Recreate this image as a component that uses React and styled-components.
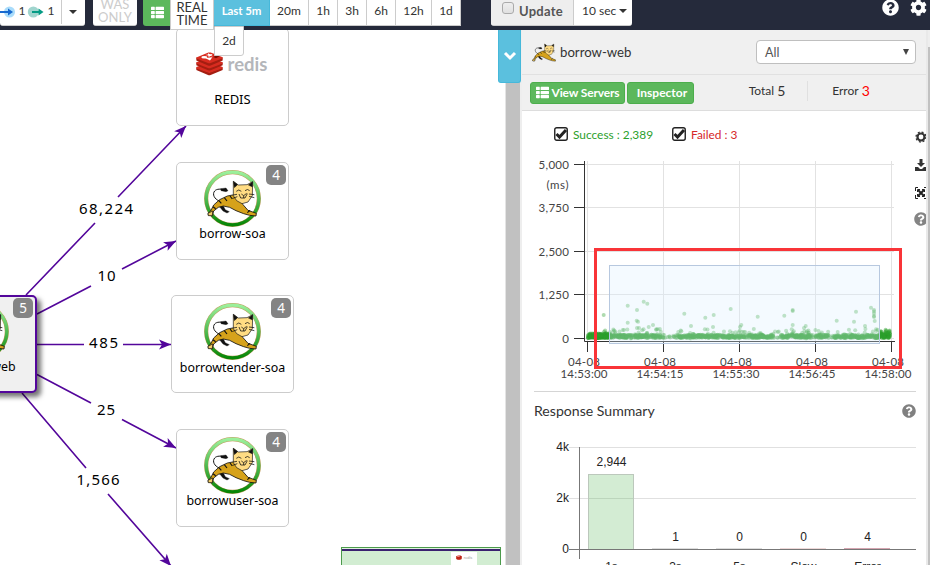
import React from "react";
import styled, { createGlobalStyle, css } from "styled-components";
import { FaCog, FaQuestionCircle, FaThList } from "react-icons/fa";

const GlobalStyle = createGlobalStyle`
  * { box-sizing: border-box; }
  body { margin: 0; background: #fff; font-family: Lato, "Liberation Sans", sans-serif; font-size: 13px; color: #333; overflow: hidden; }
`;

const PURPLE = "#53069b";

const Page = styled.div`
  width: 930px;
  height: 565px;
  display: flex;
  flex-direction: column;
  overflow: hidden;
`;

const Header = styled.header`
  height: 30px;
  flex: none;
  display: flex;
  align-items: flex-start;
  background: #252a3b;
  position: relative;
  z-index: 5;
`;

const Bar = styled.div`
  display: flex;
  height: 26px;
  width: ${(p) => p.$width}px;
  margin-right: ${(p) => p.$gap || 0}px;
  background: #fff;
  border-radius: 0 0 3px 3px;
  border-bottom: 1px solid #ccc;
  overflow: hidden;
`;

const CallCounts = styled.div`
  display: flex;
  align-items: center;
  width: 62px;
  height: 24px;
  border-right: 1px solid #ccc;
`;

const One = styled.span`
  width: ${(p) => p.$width}px;
  text-align: center;
  font-size: 12px;
  line-height: 14px;
  padding-bottom: 2px;
`;

const Caret = styled.span`
  width: 0;
  height: 0;
  border: 4px solid transparent;
  border-top-color: #333;
  border-bottom: 0;
  margin: ${(p) => p.$margin || "0"};
  ${(p) => p.$tall && css`
    border-width: 6px 3.5px 0;
    border-top-color: #444;
  `}
`;

const Stacked = styled.button`
  width: ${(p) => p.$width}px;
  height: ${(p) => p.$height}px;
  margin: 0 ${(p) => p.$gap || 0}px 0 0;
  padding: 0 0 ${(p) => p.$pad || 0}px;
  border: 0 solid #ccc;
  border-width: 0 ${(p) => (p.$side ? "1px" : 0)} 1px;
  border-radius: ${(p) => (p.$side ? 0 : "0 0 3px 3px")};
  background: #fff;
  color: ${(p) => p.$color};
  font: 13px/13px Lato, sans-serif;
  display: flex;
  flex-direction: column;
  align-items: center;
  justify-content: flex-end;
`;

const ListButton = styled.button`
  width: 27px;
  height: 26px;
  border: 0;
  padding: 0 0 2px 1px;
  background: #5cb85c;
  color: #fff;
  border-radius: 0 0 0 3px;
  display: grid;
  place-items: center;
`;

const Ranges = styled.div`
  display: flex;
  position: relative;
  margin-right: 30px;
`;

const Range = styled.button`
  width: ${(p) => p.$width}px;
  height: 26px;
  border: 0 solid #ccc;
  border-width: 0 1px 1px 0;
  background: #fff;
  color: #333;
  padding: 0 0 4px;
  font: 12px/20px Lato, sans-serif;
  ${(p) => p.$active && css`
    background: #5bc0de;
    border-color: #46b8da;
    color: #fff;
    font-weight: 700;
    font-size: 11.5px;
    letter-spacing: -0.1px;
  `}
`;

const WrappedRange = styled(Range)`
  position: absolute;
  left: 0;
  top: 26px;
  height: 30px;
  padding: 0;
  border-width: 1px;
  border-radius: 0 0 3px 0;
`;

const UpdateToggle = styled.div`
  width: 83px;
  display: flex;
  align-items: center;
  gap: 5px;
  padding: 0 0 3px 11px;
  background: #eee;
  border-right: 1px solid #ccc;
  color: #555;
  font-size: 13px;
  font-weight: 700;
  letter-spacing: 0.25px;
`;

const Tick = styled.span`
  width: 12px;
  height: 12px;
  margin-top: -6px;
  border: 1px solid #aaa;
  border-radius: 3px;
  background: linear-gradient(#eee, #e0e0e0);
`;

const Interval = styled.div`
  flex: 1;
  display: flex;
  align-items: center;
  font-size: 12px;
  padding: 0 0 4px 8px;
`;

const HeaderIcons = styled.div`
  margin: -1px 0 0 auto;
  display: flex;
  gap: 11px;
  padding-right: 3px;
  color: #fff;
  height: 17px;
`;

const Main = styled.main`
  flex: 1;
  display: flex;
  min-height: 0;
`;

const MapArea = styled.section`
  position: relative;
  width: 505px;
  flex: none;
  background: #fff;
  overflow: hidden;
`;

const Edges = styled.svg`
  position: absolute;
  inset: 0;
  font-family: "Noto Sans", sans-serif;
  font-size: 15px;
`;

const Node = styled.div`
  position: absolute;
  left: ${(p) => p.$x}px;
  top: ${(p) => p.$y}px;
  width: ${(p) => p.$w}px;
  height: 98px;
  display: flex;
  flex-direction: column;
  align-items: center;
  padding-top: 7px;
  border: 1px solid #ccc;
  border-radius: 5px;
  background: #fff;
  color: #000;
  ${(p) => p.$current && css`
    padding-top: 6px;
    background: #f0f0f0;
    border: 2px solid ${PURPLE};
    box-shadow: 4px 4px 5px rgba(0, 0, 0, 0.55);
  `}
`;

const NodeLabel = styled.div`
  font: ${(p) => p.$size || 12.4}px/17px "Noto Sans", sans-serif;
  white-space: nowrap;
  margin-top: ${(p) => p.$top ?? -2}px;
`;

const Badge = styled.span`
  position: absolute;
  right: 2px;
  top: ${(p) => (p.$current ? 1 : 2)}px;
  width: 20px;
  height: 20px;
  border-radius: 5px;
  background: #848484;
  color: #fff;
  text-align: center;
  font: 13.5px/20px "Noto Sans", sans-serif;
`;

const RedisArt = styled.div`
  display: flex;
  align-items: center;
  gap: 5px;
  margin: 16px 2px 0 0;
  height: 24px;
  color: #b4b6ba;
  font: 700 18.5px/24px Lato, sans-serif;
`;

const MiniMap = styled.div`
  position: absolute;
  left: 341px;
  top: 517px;
  width: 160px;
  height: 30px;
  padding-left: 109px;
  border: 1px solid #4b9a4b;
  background: linear-gradient(#ddf2dd 0 1px, #3b2170 1px 3px, #d2edd2 3px);
`;

const MiniNode = styled.div`
  width: 26px;
  height: 20px;
  margin-top: 4px;
  background: #fff;
  display: flex;
  justify-content: center;
  padding-top: 3px;
  gap: 2px;
  font: 4px/6px Lato, sans-serif;
  color: #999;
`;

const Splitter = styled.div`
  width: 17px;
  flex: none;
  position: relative;
  background: #c1c1c1;
  border-left: 1px solid #e4e4e4;
  border-right: 2px solid #eee;
`;

const Collapse = styled.button`
  position: absolute;
  right: -1px;
  top: 0;
  width: 23px;
  height: 53px;
  padding: 0 0 0 1px;
  border: 1px solid #46b8da;
  border-top: 0;
  border-radius: 0 0 3px 3px;
  background: #5bc0de;
  display: grid;
  place-items: center;
`;

const Panel = styled.aside`
  width: 404px;
  flex: none;
  display: flex;
  flex-direction: column;
`;

const Scroll = styled.div`
  width: 4px;
  border-left: 2px solid #e9e9e9;
  background: linear-gradient(#eee 0 17px, #c1c1c1 17px);
`;

const PanelTitle = styled.div`
  height: 45px;
  flex: none;
  background: #f0f0f0;
  border-bottom: 1px solid #e1e1e1;
  display: flex;
  align-items: center;
  padding: 0 10px;
  font-size: 13.2px;
  gap: 4px;
`;

const Select = styled.div`
  margin-left: auto;
  width: 160px;
  height: 24px;
  border: 1px solid #bfbfbf;
  border-radius: 4px;
  background: #fff;
  display: flex;
  align-items: center;
  justify-content: space-between;
  padding: 0 6px 0 8px;
  font-size: 12.5px;
  color: #555;
`;

const Stats = styled.div`
  height: 36px;
  flex: none;
  background: #f0f0f0;
  border-bottom: 1px solid #ddd;
  display: flex;
  align-items: center;
  padding-left: 8px;
`;

const GreenButton = styled.button`
  width: ${(p) => p.$width}px;
  height: 22px;
  margin-right: 2px;
  padding: 0 0 1px ${(p) => p.$pad || 0}px;
  border: 1px solid #4cae4c;
  border-radius: 3px;
  background: #5cb85c;
  color: #fff;
  font: 700 12px Lato, sans-serif;
  letter-spacing: ${(p) => (p.$pad ? 0 : -0.15)}px;
  display: flex;
  align-items: center;
  justify-content: center;
  gap: 3px;
  white-space: nowrap;
`;

const Stat = styled.div`
  width: ${(p) => p.$width}px;
  height: 20px;
  margin-top: -4px;
  display: flex;
  align-items: center;
  justify-content: center;
  gap: 3px;
  font-size: 12px;
  border-right: ${(p) => (p.$line ? "1px solid #e0e0e0" : 0)};
  padding-left: ${(p) => p.$pad || 0}px;
`;

const StatValue = styled.span`
  font-size: 14px;
  color: ${(p) => p.$color || "#333"};
`;

const Scatter = styled.div`
  height: 281px;
  flex: none;
  position: relative;
  margin: 0 10px 0 12px;
  border-bottom: 1px solid #d5d5d5;
`;

const Legend = styled.div`
  display: flex;
  align-items: center;
  padding: 15px 0 0 20px;
  height: 31px;
`;

const LegendItem = styled.div`
  display: flex;
  align-items: center;
  gap: 5px;
  width: 118px;
  color: ${(p) => p.$color};
  font-size: 11.9px;
`;

const Chart = styled.svg`
  display: block;
  overflow: visible;
`;

const Tools = styled.div`
  position: absolute;
  right: -10px;
  top: 19px;
  width: 12px;
  overflow: hidden;
  display: flex;
  flex-direction: column;
  gap: 14px;
`;

const HelpTool = styled(FaQuestionCircle)`
  margin-top: -2px;
`;

const SummaryTitle = styled.div`
  height: 39px;
  flex: none;
  display: flex;
  align-items: center;
  justify-content: space-between;
  padding: 0 10px 2px 12px;
  font-size: 14.1px;
`;

function Cat() {
  return (
    <g stroke="#111" strokeLinejoin="round">
      <path d="M47 94C31 87 24 73 32 63C38 56 51 56 65 61" fill="none" strokeWidth="3" />
      <path d="M50 56L66 54L72 62L66 65L51 62Z" fill="#111" strokeWidth="1" />
      <path d="M44 105L57 106L64 119L76 125L69 129L57 123L48 112Z" fill="#111" />
      <path d="M13 136L12 130L20 123L29 105L47 89L70 78L91 74L106 89L117 104L132 121L157 130L156 138L137 136L119 131L96 122L77 112L58 108L43 112L29 123L25 137Z" fill="#d6a21b" strokeWidth="2.5" />
      <path d="M12 130L26 123L25 137L13 137Z" fill="#f3cf69" strokeWidth="2" />
      <path d="M44 91L52 100M61 83L69 93M78 78L85 87M27 110L35 116M138 121L130 128" strokeWidth="3.5" />
      <path d="M88 34L103 45L129 44L146 35L145 77L132 96L114 101L98 92L88 77Z" fill="#ffdc83" strokeWidth="2" />
      <path d="M88 34L101 44L91 53ZM146 35L133 45L145 51Z" fill="#111" />
      <path d="M97 64Q104 56 112 64M123 62Q131 55 137 62M105 72L110 84L123 84L130 71M112 72L119 77L128 70M119 77V84M88 75L99 73M86 85L100 80M135 72L151 74M135 79L151 83" fill="none" strokeWidth="2.3" />
    </g>
  );
}

function Tomcat({ id }) {
  return (
    <svg width="57" height="57" viewBox="0 0 171 171">
      <defs>
        <linearGradient id={id} x2="0" y2="1">
          <stop stopColor="#9bf09b" />
          <stop offset="1" stopColor="#078607" />
        </linearGradient>
      </defs>
      <circle cx="85.5" cy="85.5" r="79" fill="#fff" stroke="#c29b5c" strokeWidth="12.5" />
      <circle cx="85.5" cy="85.5" r="79" fill="none" stroke={`url(#${id})`} strokeWidth="10" />
      <Cat />
    </svg>
  );
}

function RedisCube({ width = 27 }) {
  return (
    <svg width={width} height={width * 0.87} viewBox="0 0 81 69">
      <path d="M1 46L40 60L80 46V53L44 68Q40 70 36 68L1 53Z" fill="#a41e11" />
      <path d="M1 44L40 30L80 44V48L44 61Q40 63 36 61L1 49Z" fill="#d82c20" />
      <path d="M1 31L40 45L80 31V39L44 54Q40 55 36 54L1 39Z" fill="#a41e11" />
      <path d="M1 30L40 16L80 30V34L44 47Q40 49 36 47L1 34Z" fill="#d82c20" />
      <path d="M1 16L40 30L80 16V25L44 40Q40 41 36 40L1 25Z" fill="#a41e11" />
      <path d="M1 16L37 1Q40 0 44 1L80 15V18L44 32Q40 34 36 32L1 19Z" fill="#d82c20" />
      <path d="M36 3L42 6L50 5L46 9L51 12L43 11L38 14L37 10L28 8L36 7ZM27 17L49 15L42 25Z" fill="#fff" />
      <ellipse cx="25" cy="15" rx="9" ry="4" fill="#fff" />
      <path d="M52 14L62 9L70 13L60 18Z" fill="#7a0c00" />
    </svg>
  );
}

function CallArrow({ color, halo, width, haloX, start, tip }) {
  return (
    <svg width={width} height="14" viewBox={`0 0 ${width} 14`}>
      <circle cx={haloX} cy="7" r="5.5" fill={halo} />
      <path d={`M${start} 7H${tip - 3}`} stroke={color} strokeWidth="1.8" />
      <path d={`M${tip - 5} 3.5L${tip} 7L${tip - 5} 10.5Z`} fill={color} />
    </svg>
  );
}

const edges = [
  { label: "68,224", w: 54, x: 106, y: 184, a: [26, 265, 95, 193], b: [118, 167, 186, 96] },
  { label: "10", w: 18, x: 106.5, y: 251, a: [37, 284, 91, 256], b: [122, 239, 176, 211] },
  { label: "485", w: 29, x: 103.5, y: 318, a: [37, 314.5, 84, 314.5], b: [123, 314.5, 171, 314.5] },
  { label: "25", w: 18, x: 106, y: 385, a: [37, 344.5, 91, 373], b: [122, 389.5, 176, 418] },
  { label: "1,566", w: 43, x: 98, y: 455, a: [22, 363, 86, 438], b: [108, 464, 171, 536] },
];

const ranges = [["Last 5m", 56], ["20m", 39], ["1h", 29], ["3h", 29], ["6h", 29], ["12h", 36], ["1d", 29]];

function Edge({ edge }) {
  const [x1, y1, x2, y2] = edge.b;
  const angle = (Math.atan2(y2 - y1, x2 - x1) * 180) / Math.PI;
  return (
    <g>
      <path d={`M${edge.a[0]} ${edge.a[1]}L${edge.a[2]} ${edge.a[3]}M${x1} ${y1}L${x2} ${y2}`} stroke={PURPLE} strokeWidth="1.6" />
      <path d="M0 0L-12 -4.9L-9 0L-12 4.9Z" fill={PURPLE} transform={`translate(${x2} ${y2}) rotate(${angle})`} />
      <text x={edge.x} y={edge.y} textAnchor="middle" textLength={edge.w}>{edge.label}</text>
    </g>
  );
}

const outliers = [
  [603.7, 315], [627.7, 305.7], [643.7, 301.7], [647.3, 303.7], [637, 310], [627.7, 322.7], [636.7, 320.7],
  [638, 321.7], [653, 325], [648.7, 327], [684.3, 313.7], [705.3, 317.7], [713.7, 315], [730.7, 309], [757.7, 316.7],
  [784.3, 315.7], [792.7, 310], [792.7, 311], [792.7, 325], [836.7, 320.7], [854, 321.7], [856, 311.7], [871, 307.7],
  [874, 310], [874, 311.5], [874, 313.5], [874, 316], [874, 317], [874.7, 321], [805.7, 326], [804, 328], [741.3, 325],
  [740, 327], [865, 326], [691, 326], [713, 327], [637, 328], [639, 328],
];

function makeDots() {
  let seed = 29;
  const rnd = () => {
    seed = (seed * 16807) % 2147483647;
    return seed / 2147483647;
  };
  const dots = [];
  for (let i = 0; i < 1350; i++) {
    const x = 588 + rnd() * 302;
    const sparse = (x > 661 && x < 677) || (x > 774 && x < 781) || (x > 829 && x < 834);
    if (sparse && rnd() < 0.8) continue;
    const y = rnd() < 0.86 ? 334.8 + rnd() * 3.2 : 329 + rnd() * 9.5;
    dots.push([x, y]);
  }
  for (let i = 0; i < 150; i++) dots.push([588 + rnd() * 23, 333.5 + rnd() * 4.5]);
  for (let i = 0; i < 50; i++) dots.push([880 + rnd() * 10, 331 + rnd() * 7]);
  return dots.concat(outliers);
}
const dots = makeDots();

function ScatterPlot() {
  const rows = [["5,000", 164.5], ["3,750", 207.5], ["2,500", 251.5], ["1,250", 294.5], ["0", 338.5]];
  const cols = [["14:53:00", 587.5], ["14:54:15", 663.5], ["14:55:30", 739.5], ["14:56:45", 815.5], ["14:58:00", 891.5]];
  return (
    <Chart width="370" height="238" viewBox="534 142 370 238" fontSize="11.5" fill="#444">
      {rows.map(([t, y]) => (
        <g key={t}>
          <path d={`M585 ${y}H894`} stroke="#e2e2e2" />
          <path d={`M574 ${y}H585`} stroke="#333" />
          <text x="569" y={y + 4.5} textAnchor="end" textLength={t === "0" ? 6.5 : 30.5}>{t}</text>
        </g>
      ))}
      <text x="568.5" y="189" textAnchor="end" textLength="22">(ms)</text>
      {cols.map(([t, x]) => (
        <g key={t}>
          <path d={`M${x} 161V341`} stroke="#e2e2e2" />
          <path d={`M${x} 342V352`} stroke="#333" />
        </g>
      ))}
      <path d="M584.5 161V341.5H895" fill="none" stroke="#333" />
      {dots.map(([x, y], i) => <circle key={i} cx={x} cy={y} r="2" fill="#2ca02c" opacity="0.38" />)}
      <rect x="609.5" y="265.5" width="270" height="78" fill="rgba(218,240,255,.3)" stroke="#b7c8df" />
      {cols.map(([t, x]) => (
        <g key={t} textAnchor="middle">
          <text x={x - 3.5} y="366" textLength="32">04-08</text>
          <text x={x - 3.5} y="378" textLength="47">{t}</text>
        </g>
      ))}
      <rect x="595.5" y="249.5" width="305" height="118" fill="none" stroke="#f93438" strokeWidth="3" />
    </Chart>
  );
}

function SummaryPlot() {
  const bars = [["1s", "2,944", 611.5, 466], ["3s", "1", 675.5, 541], ["5s", "0", 739.5, 541], ["Slow", "0", 803.5, 541], ["Error", "4", 867.5, 541]];
  return (
    <Chart width="394" height="134" viewBox="522 431 394 134" fontFamily="Liberation Sans, sans-serif" fontSize="12" fill="#222">
      {[["4k", 447.5], ["2k", 498.5], ["0", 549.5]].map(([t, y]) => (
        <g key={t}>
          <path d={`M569 ${y}H916`} stroke={t === "0" ? "#777" : "#e0e0e0"} />
          <text x="569" y={y + 3.5} textAnchor="end">{t}</text>
        </g>
      ))}
      <rect x="588.5" y="474.5" width="45" height="75" fill="rgba(92,184,92,.27)" stroke="#bcc8bc" />
      <path d="M569 549.5H916M579.5 447V559" stroke="#777" />
      <path d="M652 548.5H698M716 548.5H762" stroke="#ddd" />
      <path d="M780 548.5H826" stroke="#edd8d8" />
      <path d="M844 548.5H890" stroke="#d5a5b0" />
      {bars.map(([t, v, x, y]) => (
        <g key={t} textAnchor="middle">
          <text x={x} y={y}>{v}</text>
          <text x={x} y="571">{t}</text>
        </g>
      ))}
    </Chart>
  );
}

function CheckMark() {
  return (
    <svg width="14" height="14" viewBox="0 0 14 14" fill="none">
      <rect x="0.75" y="0.75" width="12.5" height="12.5" rx="2" stroke="#222" strokeWidth="1.4" />
      <path d="M2.5 7L5.5 10L12 3" stroke="#222" strokeWidth="3" />
    </svg>
  );
}

function Gear() {
  return (
    <svg width="14" height="14" viewBox="0 0 14 14" fill="none" stroke="#333">
      <circle cx="7" cy="7" r="3.5" strokeWidth="2.2" />
      <circle cx="7" cy="7" r="5" strokeWidth="1.3" strokeDasharray="2 1.93" />
    </svg>
  );
}

function Download() {
  return (
    <svg width="14" height="14" viewBox="0 0 14 14" fill="#333">
      <path d="M5.5 1H8.5V5H11L7 9L3 5H5.5ZM1 9H4L6 11H8L10 9H13V13H1Z" />
    </svg>
  );
}

function Expand() {
  return (
    <svg width="14" height="14" viewBox="0 0 14 14" fill="none" stroke="#222">
      <path d="M1.5 5V1.5H4M10 1.5H12.5V5M12.5 9V12.5H10M4 12.5H1.5V9" />
      <path d="M4 4L10 10M10 4L4 10" strokeWidth="2" />
      <path d="M3.5 6V3.5H6M8 3.5H10.5V6M10.5 8V10.5H8M6 10.5H3.5V8" />
    </svg>
  );
}

export default function App() {
  return (
    <Page>
      <GlobalStyle />
      <Header>
        <Bar $width={85} $gap={8}>
          <CallCounts>
            <CallArrow width={17} haloX={9.5} start={0} tip={13} color="#1769cf" halo="#a9dcfb" />
            <One $width={10}>1</One>
            <CallArrow width={18} haloX={6.3} start={5} tip={16.5} color="#049b85" halo="#a0d5ce" />
            <One $width={12}>1</One>
          </CallCounts>
          <Caret $margin="10px 0 0 7px" />
        </Bar>
        <Stacked $width={44} $height={26} $gap={6} $pad={1} $color="#ccc">
          <span>WAS</span><span>ONLY</span>
        </Stacked>
        <ListButton><FaThList size={13} /></ListButton>
        <Stacked $width={44} $height={30} $side $pad={2} $color="#333">
          <span>REAL</span><span>TIME</span>
        </Stacked>
        <Ranges>
          {ranges.map(([t, w], i) => <Range key={t} $width={w} $active={i === 0}>{t}</Range>)}
          <WrappedRange $width={30}>2d</WrappedRange>
        </Ranges>
        <Bar $width={141}>
          <UpdateToggle><Tick />Update</UpdateToggle>
          <Interval>10 sec<Caret $margin="1px 0 0 3px" /></Interval>
        </Bar>
        <HeaderIcons><FaQuestionCircle size={17} /><FaCog size={17} /></HeaderIcons>
      </Header>
      <Main>
        <MapArea>
          <Edges width="505" height="535">
            {edges.map((e) => <Edge key={e.label} edge={e} />)}
          </Edges>
          <Node $x={-76} $y={265} $w={113} $current>
            <Tomcat id="ringWeb" />
            <NodeLabel>borrow-web</NodeLabel>
            <Badge $current>5</Badge>
          </Node>
          <Node $x={176} $y={-2} $w={113}>
            <RedisArt><RedisCube />redis</RedisArt>
            <NodeLabel $top={15} $size={13}>REDIS</NodeLabel>
          </Node>
          <Node $x={176} $y={132} $w={113}>
            <Tomcat id="ringSoa" />
            <NodeLabel>borrow-soa</NodeLabel>
            <Badge>4</Badge>
          </Node>
          <Node $x={171} $y={265} $w={123}>
            <Tomcat id="ringTender" />
            <NodeLabel $top={-1}>borrowtender-soa</NodeLabel>
            <Badge>4</Badge>
          </Node>
          <Node $x={176} $y={399} $w={113}>
            <Tomcat id="ringUser" />
            <NodeLabel>borrowuser-soa</NodeLabel>
            <Badge>4</Badge>
          </Node>
          <MiniMap><MiniNode><RedisCube width={6} />redis</MiniNode></MiniMap>
        </MapArea>
        <Splitter>
          <Collapse>
            <svg width="14" height="10" viewBox="0 0 14 10" fill="none" stroke="#fff" strokeWidth="3">
              <path d="M2 2L7 7L12 2" />
            </svg>
          </Collapse>
        </Splitter>
        <Panel>
          <PanelTitle>
            <svg width="24" height="19" viewBox="8 28 152 115" preserveAspectRatio="none"><Cat /></svg>
            borrow-web
            <Select>All<Caret $tall /></Select>
          </PanelTitle>
          <Stats>
            <GreenButton $width={95}><FaThList size={13} />View Servers</GreenButton>
            <GreenButton $width={67} $pad={3}>Inspector</GreenButton>
            <Stat $width={112} $line $pad={31}>Total <StatValue>5</StatValue></Stat>
            <Stat $width={86}>Error <StatValue $color="#f00">3</StatValue></Stat>
          </Stats>
          <Scatter>
            <Legend>
              <LegendItem $color="#2ca02c"><CheckMark />Success : 2,389</LegendItem>
              <LegendItem $color="#d62728"><CheckMark />Failed : 3</LegendItem>
            </Legend>
            <ScatterPlot />
            <Tools>
              <Gear />
              <Download />
              <Expand />
              <HelpTool size={14} color="#848484" />
            </Tools>
          </Scatter>
          <SummaryTitle>Response Summary<FaQuestionCircle size={14} color="#808080" /></SummaryTitle>
          <SummaryPlot />
        </Panel>
        <Scroll />
      </Main>
    </Page>
  );
}
